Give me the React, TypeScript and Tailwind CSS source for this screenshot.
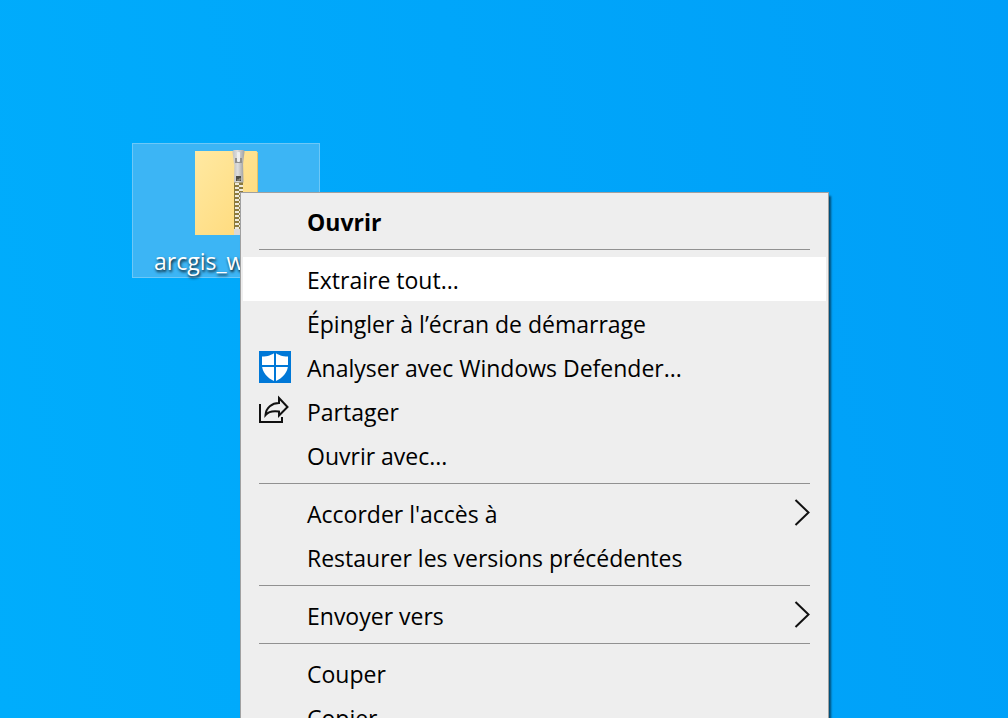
import { clsx } from "clsx";
import { memo, type ReactNode } from "react";

type MenuEntry =
    | { type: "separator" }
    | { type: "item"; label: string; icon?: ReactNode; bold?: boolean; active?: boolean; submenu?: boolean };

// y positions of the zipper teeth
const Teeth = Array.from({ length: 12 }, (_, i) => 34 + i * 4);

const ZipFolderIcon = () => (
    <svg width="66" height="88" viewBox="0 0 66 88" aria-hidden="true">
        <defs>
            <linearGradient id="folder" x1="0" y1="0" x2="1" y2="1">
                <stop offset="0" stopColor="#ffe9a2" />
                <stop offset="1" stopColor="#ffd978" />
            </linearGradient>
            <linearGradient id="metal" x1="0" y1="0" x2="1" y2="0">
                <stop offset="0" stopColor="#c4c4c4" />
                <stop offset="0.4" stopColor="#dedede" />
                <stop offset="1" stopColor="#a2a2a2" />
            </linearGradient>
        </defs>
        <path d="M2 2H63.5L65 4V86H2Z" fill="url(#folder)" />
        <path d="M64.5 4V86" stroke="#e3c266" strokeWidth="1" />
        <rect x="41" y="32" width="9" height="48" fill="#8c7a3c" />
        {Teeth.map((y) => (
            <g key={y} fill="#efeadb">
                <rect x="42" y={y} width="4" height="2" />
                <rect x="46" y={y + 2} width="4" height="2" />
            </g>
        ))}
        <rect x="41" y="80" width="9" height="6" fill="#d8d8d8" />
        <path d="M39.5 3Q39.5 1 41.500 1H50Q52 1 51.500 3L50 15H41Z" fill="url(#metal)" />
        <path d="M41.5 12H50L50.500 33.5H41Z" fill="url(#metal)" />
        <path d="M42 9H49V14H42Z" fill="#909090" />
        <rect x="44" y="3" width="3" height="10" rx="1" fill="#efefef" />
        <rect x="43" y="27" width="5" height="5" fill="#4b4b45" />
        <path d="M44 31H47V29" stroke="#a9a28c" fill="none" />
    </svg>
);

const DefenderIcon = () => (
    <svg width="32" height="32" viewBox="0 0 32 32" aria-hidden="true">
        <rect width="32" height="32" fill="#0078d7" />
        <path
            d="M16 1.500C12.500 4 9 5.500 3 5.500V14C3 21 8 27 16 30.500C24 27 29 21 29 14V5.500C23 5.500 19.500 4 16 1.500Z"
            fill="#fff"
        />
        <path d="M16 0V32M2 15H30" stroke="#0078d7" strokeWidth="2" />
    </svg>
);

const ShareIcon = () => (
    <svg width="32" height="32" viewBox="0 0 32 32" fill="none" stroke="#111" strokeWidth="2" aria-hidden="true">
        <path d="M1 9V27H23V22" />
        <path d="M20 3L28.500 12L20 20.500V16.500C13.500 15.500 9.500 16.500 6.500 20C7 12.500 13 8 20 8Z" />
    </svg>
);

const SubmenuArrow = () => (
    <svg width="16" height="28" viewBox="0 0 16 28" fill="none" stroke="#111" strokeWidth="2" aria-hidden="true">
        <path d="M1.500 1L14.500 13.500L1.500 26" />
    </svg>
);

const Entries: MenuEntry[] = [
    { type: "item", label: "Ouvrir", bold: true },
    { type: "separator" },
    { type: "item", label: "Extraire tout...", active: true },
    { type: "item", label: "Épingler à l’écran de démarrage" },
    { type: "item", label: "Analyser avec Windows Defender...", icon: <DefenderIcon /> },
    { type: "item", label: "Partager", icon: <ShareIcon /> },
    { type: "item", label: "Ouvrir avec..." },
    { type: "separator" },
    { type: "item", label: "Accorder l'accès à", submenu: true },
    { type: "item", label: "Restaurer les versions précédentes" },
    { type: "separator" },
    { type: "item", label: "Envoyer vers", submenu: true },
    { type: "separator" },
    { type: "item", label: "Couper" },
    { type: "item", label: "Copier" },
];

const ContextMenu = memo(() => (
    <ul
        role="menu"
        className="absolute top-[192px] left-[240px] w-[589px] border border-[#a0a0a0] bg-[#eeeeee] px-0.5 py-1.5 shadow-[2px_4px_2px_rgba(0,0,0,0.55)]"
    >
        {Entries.map((entry, i) =>
            entry.type === "separator" ? (
                <li key={i} role="separator" className="mx-4 mt-1.5 mb-[7px] h-px bg-[#919191]" />
            ) : (
                <li key={i} role="none">
                    <button
                        type="button"
                        role="menuitem"
                        className={clsx(
                            "flex h-11 w-full items-center gap-4 px-4 text-left text-black",
                            entry.active && "bg-white"
                        )}
                    >
                        <span className="w-8 shrink-0">{entry.icon}</span>
                        <span className={clsx("flex-1 pt-0.5 whitespace-nowrap", entry.bold && "font-bold")}>
                            {entry.label}
                        </span>
                        {entry.submenu && <SubmenuArrow />}
                    </button>
                </li>
            )
        )}
    </ul>
));

ContextMenu.displayName = "ContextMenu";

export default function App() {
    return (
        <main className="relative h-screen overflow-hidden bg-linear-[80deg] from-[#00adfc] to-[#009ff8] font-['Open_Sans','Noto_Sans',sans-serif] text-[23px] leading-8 select-none">
            <button
                type="button"
                className="absolute top-[143px] left-[132px] flex h-[135px] w-[188px] flex-col items-center border border-[#6cc8f8] bg-[#3cb5f5] pt-[5px]"
            >
                <ZipFolderIcon />
                <span className="w-full pt-2 pl-[21px] text-left text-white [text-shadow:1px_2px_3px_rgba(0,0,0,0.9)]">
                    arcgis_w
                </span>
            </button>
            <ContextMenu />
        </main>
    );
}
